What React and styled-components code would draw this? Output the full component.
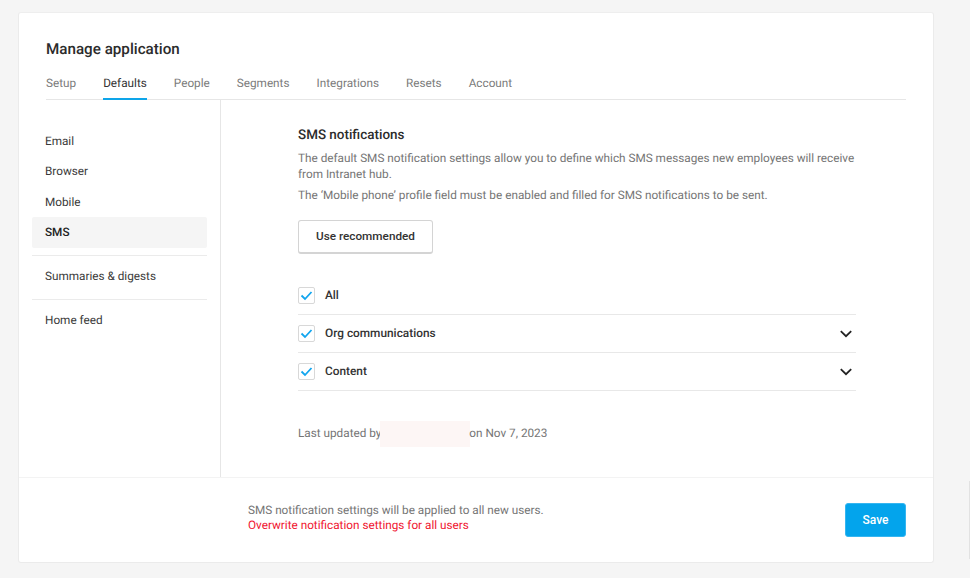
import React from "react";
import styled, { createGlobalStyle } from "styled-components";

const Global = createGlobalStyle`
  html, body { margin: 0; padding: 0; background: #f5f5f5; }
  body { font-family: Roboto, "Liberation Sans", sans-serif; color: #222; text-rendering: geometricPrecision; }
`;

const Page = styled.div`
  position: relative;
  width: 970px;
  height: 578px;
  padding: 12px 36px 15px 18px;
  box-sizing: border-box;
  overflow: hidden;
`;
const EdgeSliver = styled.div`
  position: absolute;
  right: 0;
  top: 481px;
  width: 1.5px;
  height: 78px;
  background: #e2e2e2;
`;
const Card = styled.div`
  height: 551px;
  background: #fff;
  border: 1px solid #ebebeb;
  border-top-color: #eeeeee;
  border-radius: 3px;
  box-sizing: border-box;
  display: flex;
  flex-direction: column;
`;
const Header = styled.header`
  padding: 26px 27px 0 27px;
`;
const Title = styled.h1`
  margin: 0;
  font-size: 15.2px;
  line-height: 20px;
  font-weight: 500;
  color: #2b2b2b;
`;
const Tabs = styled.nav`
  display: flex;
  gap: 27px;
  margin-top: 4px;
  height: 37px;
  border-bottom: 1px solid #e6e6e6;
  box-sizing: border-box;
`;
const Tab = styled.div`
  font-size: 11.75px;
  line-height: 18px;
  padding-top: 11px;
  height: 37px;
  box-sizing: border-box;
  color: ${(p) => (p.$active ? "#333" : "#7b7b7b")};
  font-weight: 400;
  border-bottom: 2px solid ${(p) => (p.$active ? "#0ea5e9" : "transparent")};
`;
const Body = styled.div`
  flex: 1;
  display: flex;
  min-height: 0;
`;
const Side = styled.aside`
  width: 202px;
  box-sizing: border-box;
  border-right: 1px solid #e6e6e6;
  padding: 25.5px 13px 0 13px;
`;
const SideItem = styled.div`
  height: 30.5px;
  line-height: 31px;
  padding-left: 13px;
  font-size: 11.75px;
  color: #3a3a3a;
  border-radius: 2px;
  ${(p) => p.$active && "background: #f5f5f5; font-weight: 500; color: #222;"}
`;
const SideDivider = styled.div`
  height: 1px;
  background: #ebebeb;
  margin: 7px 0 5.5px;
`;
const Main = styled.main`
  flex: 1;
  padding: 27px 77px 0 77px;
`;
const Heading = styled.h2`
  margin: 0;
  font-size: 13.45px;
  line-height: 18px;
  font-weight: 500;
  color: #2b2b2b;
`;
const Para = styled.p`
  margin: ${(p) => p.$mt}px 0 0;
  font-size: 11.78px;
  line-height: 16px;
  color: #757575;
`;
const SecondaryButton = styled.button`
  display: block;
  width: 135px;
  height: 34px;
  margin-top: 17px;
  padding: 0 0 1px;
  background: #fff;
  border: 1px solid #d4d4d4;
  border-bottom-width: 2px;
  border-radius: 3px;
  font-family: inherit;
  font-size: 11.75px;
  font-weight: 500;
  color: #333;
`;
const Options = styled.div`
  margin-top: 23px;
`;
const Row = styled.div`
  display: flex;
  align-items: center;
  height: 38px;
  box-sizing: border-box;
  border-bottom: 1px solid #e8e8e8;
  gap: 10px;
  padding-right: 4px;
`;
const Box = styled.span`
  width: 17px;
  height: 17px;
  box-sizing: border-box;
  border: 1px solid #d8d8d8;
  border-radius: 2px;
  display: flex;
  align-items: center;
  justify-content: center;
`;
const RowLabel = styled.span`
  flex: 1;
  font-size: 11.85px;
  font-weight: 500;
  color: #333;
  margin-bottom: 2px;
`;
const Updated = styled.div`
  display: flex;
  align-items: center;
  height: 26px;
  margin-top: 29px;
  font-size: 11.75px;
  color: #757575;
`;
const Redacted = styled.span`
  width: 90px;
  height: 26px;
  margin: 2px -1px 0 -1px;
  background: #fdf6f5;
`;
const Footer = styled.footer`
  height: 85px;
  box-sizing: border-box;
  border-top: 1px solid #f3f3f3;
  display: flex;
  align-items: center;
  padding: 0 27px 0 229px;
  justify-content: space-between;
`;
const Note = styled.div`
  font-size: 11.75px;
  line-height: 15px;
  color: #757575;
  margin-bottom: 5px;
`;
const Danger = styled.div`
  color: #f0142f;
`;
const SaveButton = styled.button`
  width: 61px;
  height: 34px;
  padding: 0;
  border: 1px solid #35b5f0;
  border-radius: 3px;
  background: #03a4ec;
  color: #fff;
  font-family: inherit;
  font-size: 12px;
  font-weight: 500;
`;

const Check = () => (
  <svg width="13" height="11" viewBox="0 0 13 11" fill="none">
    <path d="M1.5 5.5 L5 9 L11.5 2" stroke="#12a5ee" strokeWidth="1.8" />
  </svg>
);
const Chevron = () => (
  <svg width="12" height="8" viewBox="0 0 12 8" fill="none">
    <path d="M0.8 1.2 L6 6.2 L11.2 1.2" stroke="#222" strokeWidth="1.8" />
  </svg>
);

const tabs = ["Setup", "Defaults", "People", "Segments", "Integrations", "Resets", "Account"];
const options = [
  { label: "All" },
  { label: "Org communications", more: true },
  { label: "Content", more: true },
];

export default function App() {
  return (
    <Page>
      <Global />
      <Card>
        <Header>
          <Title>Manage application</Title>
          <Tabs>
            {tabs.map((t) => (
              <Tab key={t} $active={t === "Defaults"}>{t}</Tab>
            ))}
          </Tabs>
        </Header>
        <Body>
          <Side>
            <SideItem>Email</SideItem>
            <SideItem>Browser</SideItem>
            <SideItem>Mobile</SideItem>
            <SideItem $active>SMS</SideItem>
            <SideDivider />
            <SideItem>Summaries &amp; digests</SideItem>
            <SideDivider />
            <SideItem>Home feed</SideItem>
          </Side>
          <Main>
            <Heading>SMS notifications</Heading>
            <Para $mt={5}>
              The default SMS notification settings allow you to define which SMS messages new employees will receive
              from Intranet hub.
            </Para>
            <Para $mt={5}>The ‘Mobile phone’ profile field must be enabled and filled for SMS notifications to be sent.</Para>
            <SecondaryButton>Use recommended</SecondaryButton>
            <Options>
              {options.map((o) => (
                <Row key={o.label}>
                  <Box><Check /></Box>
                  <RowLabel>{o.label}</RowLabel>
                  {o.more && <Chevron />}
                </Row>
              ))}
            </Options>
            <Updated>
              Last updated by<Redacted />on Nov 7, 2023
            </Updated>
          </Main>
        </Body>
        <Footer>
          <Note>
            SMS notification settings will be applied to all new users.
            <Danger>Overwrite notification settings for all users</Danger>
          </Note>
          <SaveButton>Save</SaveButton>
        </Footer>
      </Card>
      <EdgeSliver />
    </Page>
  );
}
